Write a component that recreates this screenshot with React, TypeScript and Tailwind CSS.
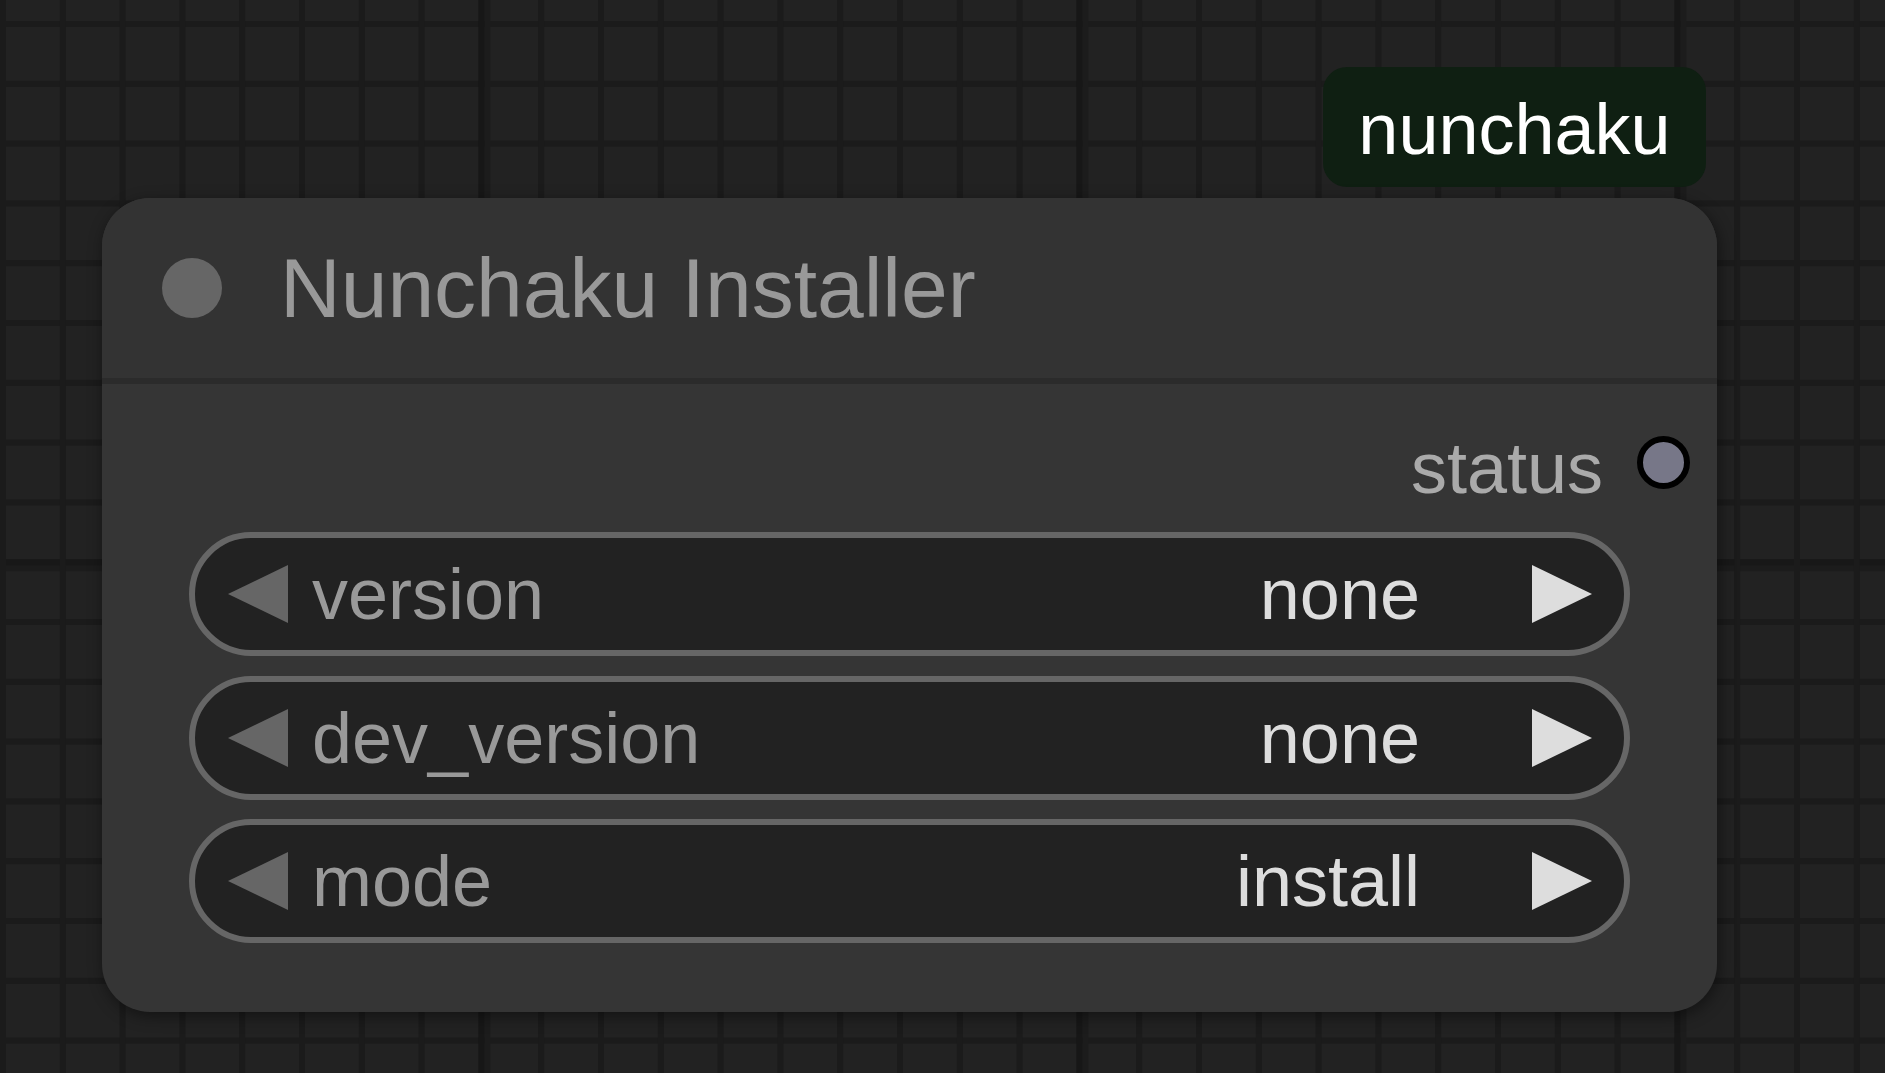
import React from "react";

const W = 1885;
const H = 1073;
const STEP = 59.8;

function Grid() {
  const v: React.ReactNode[] = [];
  for (let k = 0; k <= 32; k++) {
    const major = k % 10 === 8;
    const x = k * STEP;
    if (major) {
      v.push(<rect key={"vb" + k} x={x + 6} y={0} width={6} height={H} fill="#1c1c1c" />);
      v.push(<rect key={"v" + k} x={x} y={0} width={6} height={H} fill="#171717" />);
    } else {
      v.push(<rect key={"v" + k} x={x} y={0} width={6} height={H} fill="#1b1b1b" />);
    }
  }
  const h: React.ReactNode[] = [];
  for (let k = 0; k <= 18; k++) {
    const major = k % 10 === 9;
    const y = 21 + k * STEP;
    if (major) {
      h.push(<rect key={"hb" + k} x={0} y={y + 6} width={W} height={6} fill="#1c1c1c" />);
      h.push(<rect key={"h" + k} x={0} y={y} width={W} height={6} fill="#181818" />);
    } else {
      h.push(<rect key={"h" + k} x={0} y={y} width={W} height={6} fill="#1b1b1b" />);
    }
  }
  return (
    <svg className="absolute inset-0" width={W} height={H} viewBox={`0 0 ${W} ${H}`}>
      <rect x={0} y={0} width={W} height={H} fill="#222222" />
      {h}
      {v}
    </svg>
  );
}

function LeftArrow() {
  return (
    <svg width="60" height="58" viewBox="0 0 60 58" className="shrink-0">
      <polygon points="0,29 60,0 60,58" fill="#666666" />
    </svg>
  );
}

function RightArrow() {
  return (
    <svg width="60" height="58" viewBox="0 0 60 58" className="shrink-0">
      <polygon points="0,0 60,29 0,58" fill="#dddddd" />
    </svg>
  );
}

function Combo({ label, value }: { label: string; value: string }) {
  return (
    <div className="flex h-[124px] items-center rounded-full border-[6px] border-[#666666] bg-[#222222] pl-[33px] pr-[32px]">
      <LeftArrow />
      <span className="ml-[24px] text-[72px] leading-none text-[#999999]">{label}</span>
      <div className="flex-1" />
      <span className="text-[72px] leading-none text-[#dddddd]">{value}</span>
      <div className="ml-[112px]">
        <RightArrow />
      </div>
    </div>
  );
}

export default function App() {
  return (
    <div className="relative h-[1073px] w-[1885px] overflow-hidden bg-[#222222] font-['Liberation_Sans',Arial,sans-serif]">
      <Grid />

      {/* badge */}
      <div className="absolute left-[1323px] top-[67px] flex h-[120px] w-[383px] items-center justify-center rounded-[24px] bg-[#0f1f12] pt-[4px]">
        <span className="text-[72px] leading-none text-white">nunchaku</span>
      </div>

      {/* node */}
      <div className="absolute left-[102px] top-[198px] flex h-[814px] w-[1615px] flex-col rounded-[48px] bg-[#353535] shadow-[2px_4px_16px_rgba(0,0,0,0.45)]">
        <div className="flex h-[180px] items-center rounded-t-[48px] bg-[#333333] pl-[60px]">
          <div className="h-[60px] w-[60px] rounded-full bg-[#666666]" />
          <span className="ml-[58px] text-[84px] leading-none text-[#999999]">Nunchaku Installer</span>
        </div>
        <div className="h-[6px] bg-[#2b2b2b]" />
        <div className="flex h-[148px] items-start justify-end pr-[27px]">
          <span className="mt-[48px] text-[72px] leading-none text-[#aaaaaa]">status</span>
          <div className="ml-[34px] mt-[52px] h-[53px] w-[53px] rounded-full border-[6px] border-black bg-[#777788]" />
        </div>
        <div className="flex flex-col gap-[19.5px] px-[87px]">
          <Combo label="version" value="none" />
          <Combo label="dev_version" value="none" />
          <Combo label="mode" value="install" />
        </div>
      </div>
    </div>
  );
}
